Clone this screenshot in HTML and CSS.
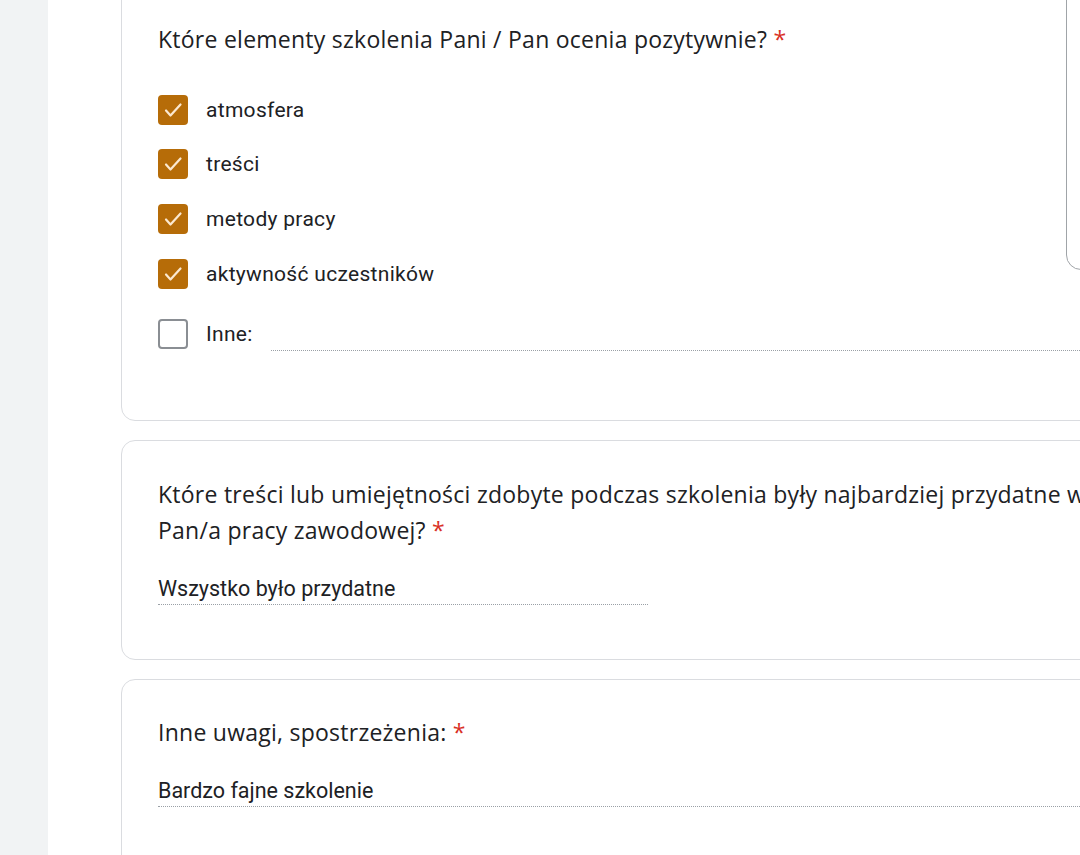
FILE: index.html
```html
<!DOCTYPE html>
<html lang="pl">
<head>
<meta charset="utf-8">
<title>Formularz</title>
<link rel="stylesheet" href="styles.css">
</head>
<body>
<div class="page">
  <aside class="rail"></aside>
  <main class="form">
    <section class="card card-first">
      <h2 class="q-title">Które elementy szkolenia Pani / Pan ocenia pozytywnie? <span class="req">*</span></h2>
      <ul class="options">
        <li class="opt"><span class="cb checked"><svg viewBox="0 0 30 30"><path d="M8 15.5 L12.5 20.5 L22.5 9.5"/></svg></span><span class="opt-label">atmosfera</span></li>
        <li class="opt"><span class="cb checked"><svg viewBox="0 0 30 30"><path d="M8 15.5 L12.5 20.5 L22.5 9.5"/></svg></span><span class="opt-label">treści</span></li>
        <li class="opt"><span class="cb checked"><svg viewBox="0 0 30 30"><path d="M8 15.5 L12.5 20.5 L22.5 9.5"/></svg></span><span class="opt-label">metody pracy</span></li>
        <li class="opt"><span class="cb checked"><svg viewBox="0 0 30 30"><path d="M8 15.5 L12.5 20.5 L22.5 9.5"/></svg></span><span class="opt-label">aktywność uczestników</span></li>
        <li class="opt opt-other"><span class="cb"></span><span class="opt-label">Inne:</span><span class="other-input"></span></li>
      </ul>
    </section>
    <section class="card card-second">
      <h2 class="q-title">Które treści lub umiejętności zdobyte podczas szkolenia były najbardziej przydatne w Pani/ Pan/a pracy zawodowej? <span class="req">*</span></h2>
      <div class="answer answer-short">Wszystko było przydatne</div>
    </section>
    <section class="card card-third">
      <h2 class="q-title">Inne uwagi, spostrzeżenia: <span class="req">*</span></h2>
      <div class="answer answer-long">Bardzo fajne szkolenie</div>
    </section>
  </main>
  <div class="side-panel"></div>
</div>
</body>
</html>
```
FILE: styles.css
```css
html, body {
  margin: 0;
  padding: 0;
  background: #ffffff;
  overflow: hidden;
  height: 855px;
}
.page {
  position: relative;
  display: flex;
  align-items: flex-start;
  height: 855px;
  overflow: hidden;
  font-family: Roboto, "Liberation Sans", sans-serif;
  color: #202124;
}
.rail {
  flex: 0 0 48px;
  align-self: stretch;
  background: #f1f3f4;
}
.form {
  flex: 0 0 auto;
  padding-left: 73px;
  display: flex;
  flex-direction: column;
  gap: 19px;
}
.card {
  flex-shrink: 0;
  width: 1100px;
  box-sizing: border-box;
  border: 1px solid #dadce0;
  border-radius: 14px;
  background: #fff;
  padding: 0 0 0 36px;
}
.card-first {
  margin-top: -30px;
  height: 451px;
  padding-top: 50px;
}
.card-second {
  height: 220px;
  padding-top: 35px;
}
.card-third {
  height: 220px;
  padding-top: 34px;
}
.q-title {
  margin: 0;
  font-family: "Open Sans", Roboto, sans-serif;
  font-weight: 400;
  font-size: 23px;
  line-height: 36px;
  letter-spacing: 0.25px;
  color: #202124;
}
.card-second .q-title {
  width: 1010px;
}
.req {
  color: #d93025;
}
.options {
  list-style: none;
  margin: 0;
  padding: 0;
  margin-top: 25.5px;
}
.opt {
  display: flex;
  align-items: center;
  height: 54.67px;
}
.opt-other {
  height: 60px;
  margin-top: 2.7px;
}
.cb {
  flex: 0 0 auto;
  width: 30px;
  height: 30px;
  box-sizing: border-box;
  border-radius: 4px;
  border: 2.5px solid #8a8e93;
  background: #fff;
  display: flex;
}
.cb.checked {
  border: none;
  background: #b66c08;
}
.cb svg {
  width: 30px;
  height: 30px;
}
.cb svg path {
  fill: none;
  stroke: #fbe8d0;
  stroke-width: 2.2;
  stroke-linecap: round;
  stroke-linejoin: round;
}
.opt-label {
  margin-left: 18px;
  font-size: 21px;
  letter-spacing: 0.3px;
  color: #202124;
}
.other-input {
  flex: 1 1 auto;
  align-self: flex-end;
  margin-left: 18px;
  margin-bottom: 13px;
  border-bottom: 1px dotted #9aa0a6;
  height: 1px;
}
.answer {
  font-size: 21.5px;
  line-height: 28px;
  color: #202124;
  border-bottom: 1px dotted #9aa0a6;
  padding-bottom: 1px;
}
.answer-short {
  margin-top: 27px;
  width: 490px;
}
.answer-long {
  margin-top: 27px;
  width: 1100px;
}
.side-panel {
  position: absolute;
  top: -20px;
  left: 1066px;
  width: 60px;
  height: 290px;
  box-sizing: border-box;
  border: 1.5px solid #a0a4a8;
  border-radius: 15px;
  background: #fff;
}
```
